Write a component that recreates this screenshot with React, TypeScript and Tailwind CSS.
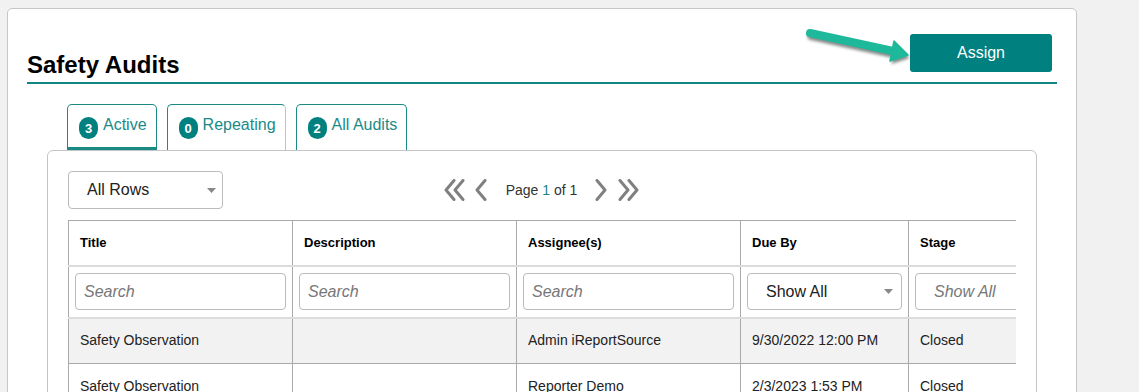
import React from "react";

const teal = "#00807f";

function Caret() {
  return (
    <svg width="9" height="5" viewBox="0 0 9 5" className="shrink-0">
      <path d="M0 0 L9 0 L4.5 5 Z" fill="#888" />
    </svg>
  );
}

function Chevron({ dir, double }: { dir: "left" | "right"; double?: boolean }) {
  const w = double ? 22 : 13;
  const one = (x: number) =>
    dir === "left"
      ? `M${x + 10} 1.5 L${x + 2} 11 L${x + 10} 20.5`
      : `M${x + 2} 1.5 L${x + 10} 11 L${x + 2} 20.5`;
  return (
    <svg width={w} height="22" viewBox={`0 0 ${w} 22`}>
      <path d={one(0)} fill="none" stroke="#808080" strokeWidth="3" strokeLinecap="round" strokeLinejoin="round" />
      {double && (
        <path d={one(9)} fill="none" stroke="#808080" strokeWidth="3" strokeLinecap="round" strokeLinejoin="round" />
      )}
    </svg>
  );
}

function Tab({
  count,
  label,
  active,
  lightRight,
}: {
  count: number;
  label: string;
  active?: boolean;
  lightRight?: boolean;
}) {
  return (
    <div
      className={`flex h-[46px] items-start rounded-t-[5px] border border-[#1a8a87] bg-white pl-[11px] pr-[9px] pt-[11px] ${
        active ? "border-b-[3px]" : "border-b-0"
      } ${lightRight ? "border-r-[#9fd1cf]" : ""}`}
    >
      <span className="mt-[1px] flex h-[22px] w-[19px] items-center justify-center rounded-full bg-[#00807f] pt-[2px] text-[13px] font-bold text-white">
        {count}
      </span>
      <span className="ml-[5px] text-[16px] leading-[18px] text-[#1a8a88]">{label}</span>
    </div>
  );
}

const cols = [
  { name: "Title", w: 224 },
  { name: "Description", w: 224 },
  { name: "Assignee(s)", w: 224 },
  { name: "Due By", w: 168 },
  { name: "Stage", w: 168 },
];

const rows = [
  ["Safety Observation", "", "Admin iReportSource", "9/30/2022 12:00 PM", "Closed"],
  ["Safety Observation", "", "Reporter Demo", "2/3/2023 1:53 PM", "Closed"],
];

export default function App() {
  return (
    <div className="relative min-h-screen overflow-hidden bg-[#f1f1f1] pt-[8px] font-['Liberation_Sans',Arial,sans-serif] text-[#222]">
      <div className="ml-[7px] w-[1070px] rounded-[5px] border border-[#c6c6c6] bg-white px-[19px] pb-10 pt-[25px]">
        {/* header */}
        <div className="flex items-end justify-between border-b-2 border-[#128583] pb-[3px]">
          <h1 className="text-[24px] font-bold leading-[28px] text-black">Safety Audits</h1>
          <button
            className="mb-[7px] mr-[5px] h-[38px] w-[142px] rounded-[3px] text-[16px] text-white"
            style={{ backgroundColor: teal }}
          >
            Assign
          </button>
        </div>

        <div className="mx-[20px] mt-[20px]">
          {/* tabs */}
          <div className="flex gap-[10px] pl-[20px]">
            <Tab count={3} label="Active" active />
            <Tab count={0} label="Repeating" lightRight />
            <Tab count={2} label="All Audits" />
          </div>

          {/* card */}
          <div className="rounded-[6px] border border-[#c4c4c4] pb-10 pl-[20px] pr-[20px] pt-[20px]">
            <div className="grid grid-cols-[1fr_auto_1fr] items-center">
              <div className="flex h-[38px] w-[155px] items-center justify-between rounded-[4px] border border-[#bbb] pl-[18px] pr-[6px] text-[16px] text-[#222]">
                <span>All Rows</span>
                <Caret />
              </div>
              <div className="flex items-center">
                <Chevron dir="left" double />
                <span className="ml-[9px]">
                  <Chevron dir="left" />
                </span>
                <span className="ml-[18px] text-[14px] text-[#333]">
                  Page <span className="text-[#1a7f86]">1</span> of 1
                </span>
                <span className="ml-[18px]">
                  <Chevron dir="right" />
                </span>
                <span className="ml-[10px]">
                  <Chevron dir="right" double />
                </span>
              </div>
              <div />
            </div>

            <div className="mt-[11px] overflow-hidden">
              <table className="table-fixed border-collapse" style={{ width: 1100 }}>
                <colgroup>
                  {cols.map((c) => (
                    <col key={c.name} style={{ width: c.w }} />
                  ))}
                  <col />
                </colgroup>
                <thead>
                  <tr>
                    {cols.map((c) => (
                      <th
                        key={c.name}
                        className="h-[45px] border border-b-2 border-[#aaa] border-b-[#dcdcdc] px-[11px] text-left text-[13px] font-bold text-black"
                      >
                        {c.name}
                      </th>
                    ))}
                    <th className="border border-b-2 border-[#aaa] border-b-[#dcdcdc]" />
                  </tr>
                  <tr>
                    {cols.map((c, i) => (
                      <th
                        key={c.name}
                        className="h-[52px] border border-b-2 border-[#aaa] border-b-[#dcdcdc] pl-[6px] pr-[6px] font-normal"
                      >
                        {i === 3 ? (
                          <div className="flex h-[37px] items-center justify-between rounded-[4px] border border-[#bbb] pl-[18px] pr-[8px] text-[16px] text-[#222]">
                            <span>Show All</span>
                            <Caret />
                          </div>
                        ) : (
                          <div
                            className={`flex h-[37px] items-center rounded-[4px] border border-[#bbb] text-[16px] italic text-[#777] ${
                              i === 4 ? "pl-[18px]" : "pl-[8px]"
                            }`}
                          >
                            {i === 4 ? "Show All" : "Search"}
                          </div>
                        )}
                      </th>
                    ))}
                    <th className="border border-b-2 border-[#aaa] border-b-[#dcdcdc]" />
                  </tr>
                </thead>
                <tbody>
                  {rows.map((r, ri) => (
                    <tr key={ri} className={ri % 2 === 0 ? "bg-[#f2f2f2]" : "bg-white"}>
                      {r.map((cell, ci) => (
                        <td key={ci} className="h-[46px] border border-[#aaa] px-[11px] text-[14px] text-[#222]">
                          {cell}
                        </td>
                      ))}
                      <td className="border border-[#aaa]" />
                    </tr>
                  ))}
                </tbody>
              </table>
            </div>
          </div>
        </div>
      </div>

      {/* annotation arrow */}
      <svg className="absolute left-[800px] top-[25px]" width="115" height="48" viewBox="0 0 115 48">
        <defs>
          <filter id="sh" x="-20%" y="-40%" width="140%" height="180%">
            <feGaussianBlur stdDeviation="1.5" />
          </filter>
        </defs>
        <g transform="translate(1.5 3)" opacity="0.55" filter="url(#sh)">
          <line x1="10" y1="8" x2="93" y2="26" stroke="#1d2b28" strokeWidth="8" strokeLinecap="round" />
          <path d="M94 16 L108 30 L90 36 Z" fill="#1d2b28" />
        </g>
        <line x1="10" y1="8" x2="93" y2="26" stroke="#1db99a" strokeWidth="8" strokeLinecap="round" />
        <path d="M94 16 L108 30 L90 36 Z" fill="#1db99a" strokeLinejoin="round" stroke="#1db99a" strokeWidth="1.5" />
      </svg>
    </div>
  );
}
